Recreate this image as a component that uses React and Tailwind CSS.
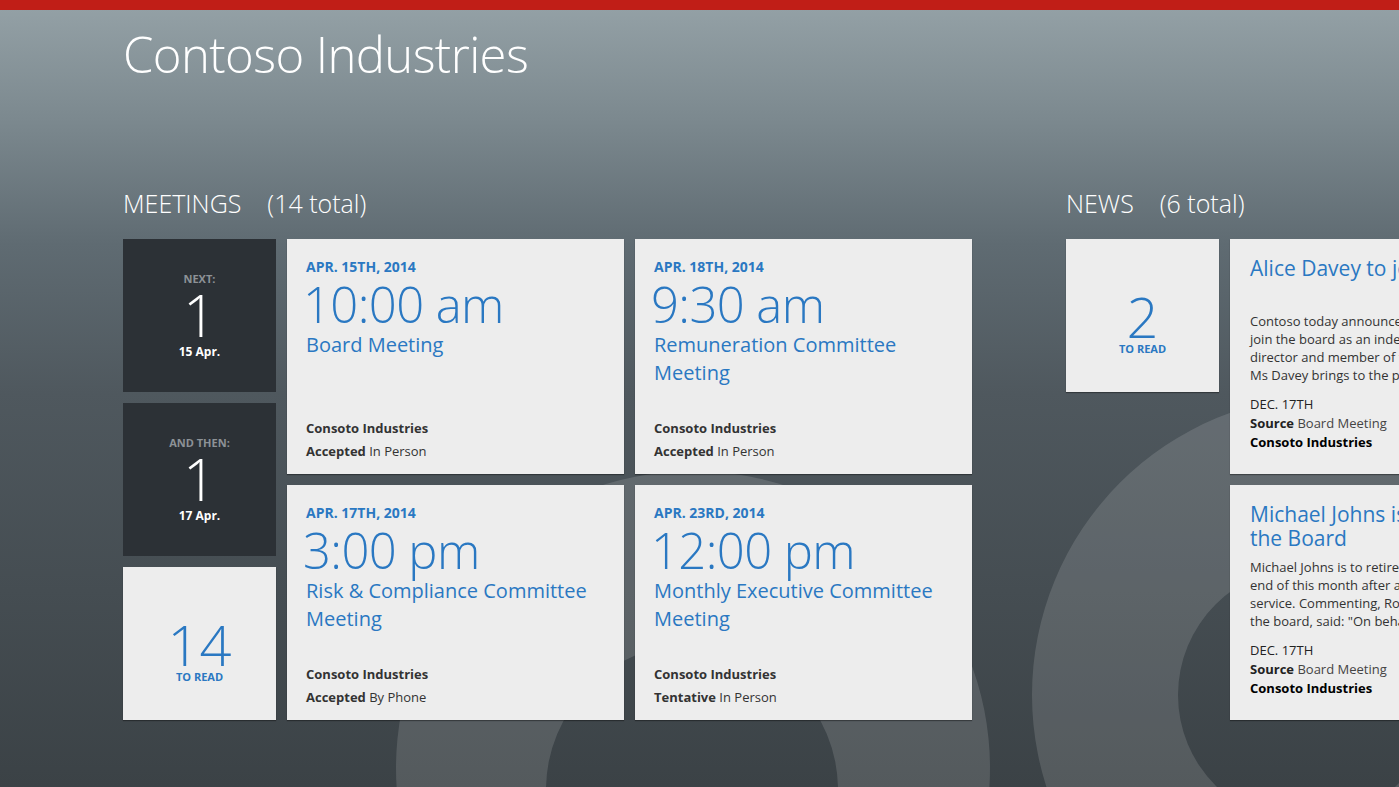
import React from "react";

const meetings = [
  { date: "APR. 15TH, 2014", time: "10:00 am", title: ["Board Meeting"], status: "Accepted", mode: "In Person" },
  { date: "APR. 18TH, 2014", time: "9:30 am", title: ["Remuneration Committee", "Meeting"], status: "Accepted", mode: "In Person" },
  { date: "APR. 17TH, 2014", time: "3:00 pm", title: ["Risk & Compliance Committee", "Meeting"], status: "Accepted", mode: "By Phone" },
  { date: "APR. 23RD, 2014", time: "12:00 pm", title: ["Monthly Executive Committee", "Meeting"], status: "Tentative", mode: "In Person" },
];

const news = [
  {
    title: ["Alice Davey to join the Board"],
    body: [
      "Contoso today announced that Alice Davey will",
      "join the board as an independent non-executive",
      "director and member of the audit committee.",
      "Ms Davey brings to the position extensive",
    ],
  },
  {
    title: ["Michael Johns is to retire from", "the Board"],
    body: [
      "Michael Johns is to retire from the board at the",
      "end of this month after a decade of dedicated",
      "service. Commenting, Robert Smith, chairman of",
      "the board, said: \"On behalf of all directors",
    ],
  },
];

function Backdrop() {
  // decorative rings behind the tiles
  const ring = (cx, cy, R, ix, iy, r) =>
    `M${cx - R},${cy} a${R},${R} 0 1,0 ${2 * R},0 a${R},${R} 0 1,0 ${-2 * R},0 Z ` +
    `M${ix - r},${iy} a${r},${r} 0 1,0 ${2 * r},0 a${r},${r} 0 1,0 ${-2 * r},0 Z`;
  return (
    <svg className="absolute inset-0 w-full h-full pointer-events-none" viewBox="0 0 1399 787" preserveAspectRatio="none">
      <path d={ring(693, 768, 297, 692, 790, 146)} fill="rgba(255,255,255,0.13)" fillRule="evenodd" />
      <path d={ring(1332, 695, 300, 1306, 695, 128)} fill="rgba(255,255,255,0.13)" fillRule="evenodd" />
    </svg>
  );
}

function DarkTile({ label, num, day }) {
  return (
    <div className="w-[153px] h-[153px] bg-[#2c3136] flex flex-col items-center justify-center">
      <div className="text-[11px] leading-[14px] font-bold text-[#8d9297]">{label}</div>
      <div className="text-[58px] leading-[58px] font-light text-white">{num}</div>
      <div className="text-[12px] leading-[16px] font-bold text-white">{day}</div>
    </div>
  );
}

function ReadTile({ num }) {
  return (
    <div className="w-[153px] h-[153px] bg-[#ededed] flex flex-col items-center justify-center pt-[12px] shadow-[0_1px_1px_rgba(0,0,0,0.35)]">
      <div className="text-[56px] leading-[56px] font-light text-[#2a78c2] -mb-[2px]">{num}</div>
      <div className="text-[11px] leading-[14px] font-bold text-[#2a78c2]">TO READ</div>
    </div>
  );
}

function MeetingCard({ m }) {
  return (
    <div className="w-[337px] h-[235px] bg-[#ededed] pt-[19px] pl-[19px] pr-[12px] pb-[11px] flex flex-col shadow-[0_1px_1px_rgba(0,0,0,0.35)]">
      <div className="text-[14px] leading-[18px] font-bold text-[#2a78c2]">{m.date}</div>
      <div className="mt-[2px] text-[49px] leading-[52px] font-light tracking-[-0.6px] text-[#2a78c2] -ml-[3px]">{m.time}</div>
      <div className="mt-[1px] text-[20px] leading-[28px] text-[#2a78c2]">
        {m.title.map((t) => (
          <div key={t}>{t}</div>
        ))}
      </div>
      <div className="mt-auto text-[13px] leading-[23px] text-[#333]">
        <div className="font-bold">Consoto Industries</div>
        <div>
          <span className="font-bold">{m.status}</span> {m.mode}
        </div>
      </div>
    </div>
  );
}

function NewsCard({ n }) {
  return (
    <div className="w-[337px] h-[235px] bg-[#ededed] pt-[17px] pl-[20px] overflow-hidden shadow-[0_1px_1px_rgba(0,0,0,0.35)]">
      <div className="h-[48px] text-[21px] leading-[24px] text-[#2a78c2] whitespace-nowrap">
        {n.title.map((t) => (
          <div key={t}>{t}</div>
        ))}
      </div>
      <div className="mt-[8px] text-[13px] leading-[18px] text-[#333] whitespace-nowrap">
        {n.body.map((l) => (
          <div key={l}>{l}</div>
        ))}
      </div>
      <div className="mt-[11px] text-[13px] leading-[19px] text-[#222]">
        <div>DEC. 17TH</div>
        <div>
          <span className="font-bold">Source</span> <span className="text-[#444]">Board Meeting</span>
        </div>
        <div className="font-bold text-black">Consoto Industries</div>
      </div>
    </div>
  );
}

export default function App() {
  return (
    <div className="relative w-full h-[787px] overflow-hidden font-['Open_Sans','Noto_Sans',sans-serif] bg-[linear-gradient(180deg,#95a2a7_0%,#7c898f_15%,#5f6b72_31%,#4f585e_50%,#3b4246_100%)]">
      <Backdrop />
      <div className="relative">
        <div className="h-[10px] bg-[#c01e17]" />
        <h1 className="mt-[18px] pl-[123px] text-[49px] leading-[52px] font-light tracking-[-0.6px] text-white">Contoso Industries</h1>

        <div className="mt-[108px] pl-[123px] flex gap-[94px]">
          <section>
            <div className="flex gap-[26px] text-[25px] leading-[30px] font-light text-white">
              <span>MEETINGS</span>
              <span>(14 total)</span>
            </div>
            <div className="mt-[21px] flex gap-[11px]">
              <div className="flex flex-col gap-[11px]">
                <DarkTile label="NEXT:" num="1" day="15 Apr." />
                <DarkTile label="AND THEN:" num="1" day="17 Apr." />
                <ReadTile num="14" />
              </div>
              <div className="grid grid-cols-[337px_337px] gap-[11px]">
                {meetings.map((m) => (
                  <MeetingCard key={m.date} m={m} />
                ))}
              </div>
            </div>
          </section>

          <section>
            <div className="flex gap-[26px] text-[25px] leading-[30px] font-light text-white">
              <span>NEWS</span>
              <span>(6 total)</span>
            </div>
            <div className="mt-[21px] flex gap-[11px]">
              <div className="flex flex-col">
                <ReadTile num="2" />
              </div>
              <div className="flex flex-col gap-[11px]">
                {news.map((n) => (
                  <NewsCard key={n.title[0]} n={n} />
                ))}
              </div>
            </div>
          </section>
        </div>
      </div>
    </div>
  );
}
